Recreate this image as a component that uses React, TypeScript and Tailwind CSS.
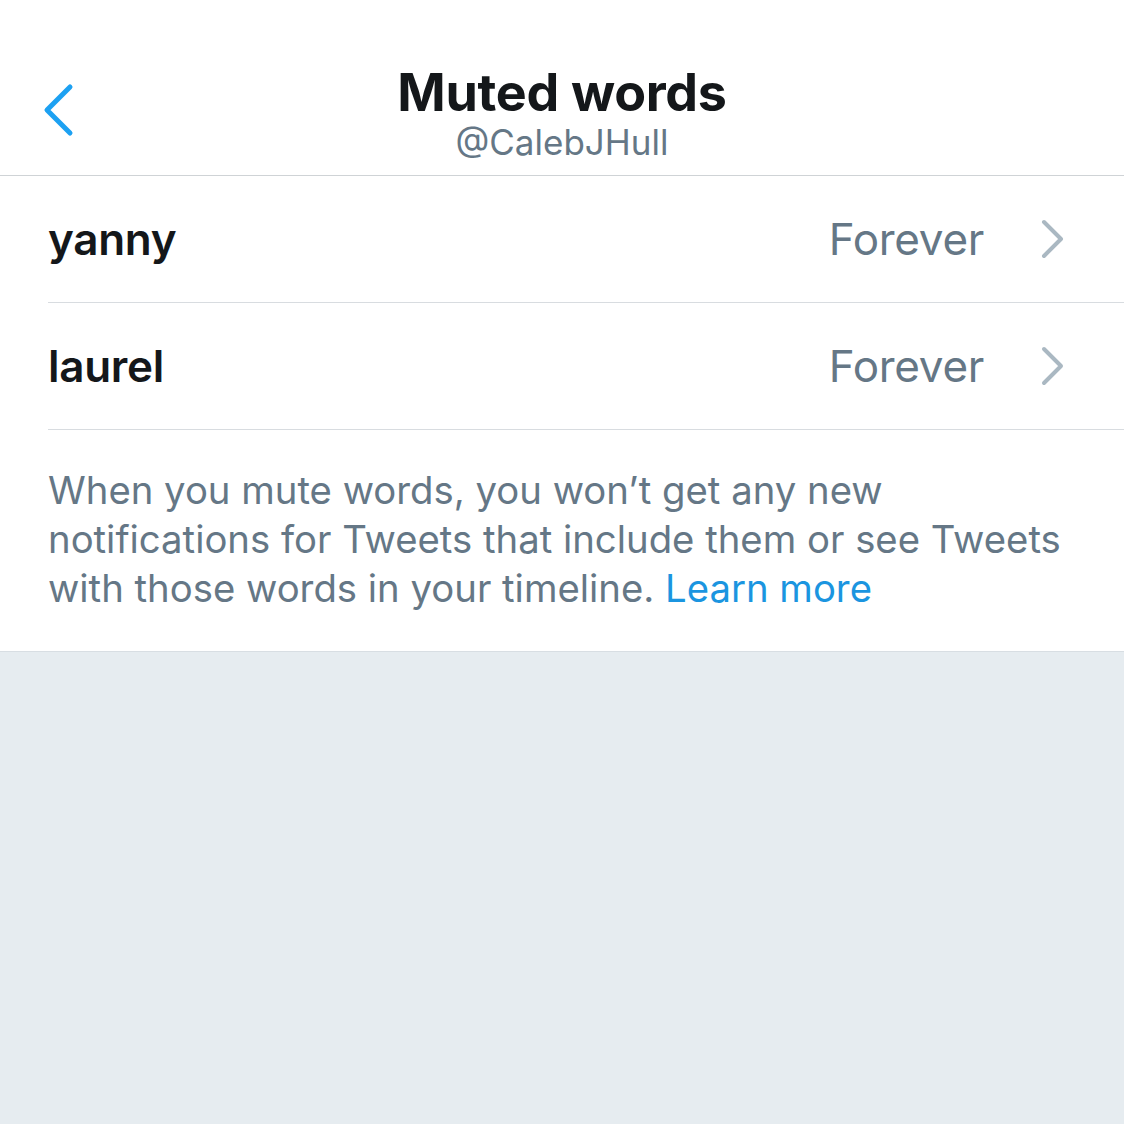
import React from "react";

const font = { fontFamily: "Inter, 'Noto Sans', sans-serif" };

function Row({ word }: { word: string }) {
  return (
    <div className="ml-[48px] flex h-[127px] items-center border-b border-[#d8dce0] pr-[58px]">
      <span className="flex-1 text-[44px] font-semibold tracking-[-0.3px] text-[#14171a]">{word}</span>
      <span className="text-[44px] tracking-[-0.3px] text-[#657786]">Forever</span>
      <svg className="ml-[56px]" width="26" height="40" viewBox="0 0 26 40" fill="none">
        <path d="M4 3 L21 20 L4 37" stroke="#aab8c2" strokeWidth="4" strokeLinecap="round" strokeLinejoin="round" />
      </svg>
    </div>
  );
}

export default function App() {
  return (
    <div className="flex min-h-[1124px] w-full flex-col bg-[#e6ecf0]" style={font}>
      <div className="bg-white">
        <div className="relative flex h-[176px] flex-col items-center border-b border-[#cfd3d6] pt-[64px]">
          <svg className="absolute left-[40px] top-[83px]" width="36" height="54" viewBox="0 0 36 54" fill="none">
            <path d="M30 4 L7 27 L30 50" stroke="#1da1f2" strokeWidth="5" strokeLinecap="round" strokeLinejoin="round" />
          </svg>
          <div className="text-[52px] font-bold leading-[58px] tracking-[-0.3px] text-[#14171a]">Muted words</div>
          <div className="text-[35px] leading-[40px] text-[#657786]">@CalebJHull</div>
        </div>
        <Row word="yanny" />
        <Row word="laurel" />
        <div className="border-b border-[#d8dee3] pb-[38px] pl-[48px] pr-[40px] pt-[36px] text-[38.3px] leading-[49px] text-[#657786]">
          <div className="whitespace-nowrap">When you mute words, you won’t get any new</div>
          <div className="whitespace-nowrap">notifications for Tweets that include them or see Tweets</div>
          <div className="whitespace-nowrap">
            with those words in your timeline. <span className="text-[#1b95e0]">Learn more</span>
          </div>
        </div>
      </div>
    </div>
  );
}
